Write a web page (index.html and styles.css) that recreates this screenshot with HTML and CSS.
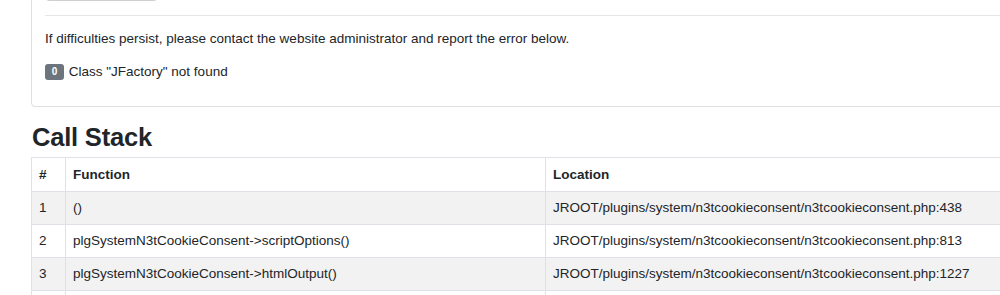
FILE: index.html
```html
<!DOCTYPE html>
<html lang="en">
<head>
  <meta charset="UTF-8">
  <title>Error</title>
  <link rel="stylesheet" href="styles.css">
</head>
<body>

<div class="page">
  <div class="card">
    <button class="back-btn">Return to home</button>
    <hr>
    <p>If difficulties persist, please contact the website administrator and report the error below.</p>
    <p><span class="badge">0</span> Class "JFactory" not found</p>
  </div>

  <h2>Call Stack</h2>
  <table class="stack">
    <thead>
      <tr><th class="num">#</th><th class="fn">Function</th><th>Location</th></tr>
    </thead>
    <tbody>
      <tr><td>1</td><td>()</td><td>JROOT/plugins/system/n3tcookieconsent/n3tcookieconsent.php:438</td></tr>
      <tr><td>2</td><td>plgSystemN3tCookieConsent-&gt;scriptOptions()</td><td>JROOT/plugins/system/n3tcookieconsent/n3tcookieconsent.php:813</td></tr>
      <tr><td>3</td><td>plgSystemN3tCookieConsent-&gt;htmlOutput()</td><td>JROOT/plugins/system/n3tcookieconsent/n3tcookieconsent.php:1227</td></tr>
      <tr><td>4</td><td>plgSystemN3tCookieConsent-&gt;onAfterRender()</td><td>JROOT/libraries/joomla/event/event.php:70</td></tr>
    </tbody>
  </table>
</div>

</body>
</html>
```

FILE: styles.css
```css
html, body { margin: 0; overflow: hidden; }
body { font-family: "Liberation Sans", Arial, sans-serif; font-size: 13.5px; color: #212529; background: white; }
.page { width: 1140px; padding-left: 31px; margin-top: -31px; }
.card { border: 1px solid #dfdfdf; border-radius: 4px; padding: 0 13px 12px; }
.back-btn { display: block; width: 113px; height: 31px; padding: 0 0 14px; background: white; border: 1px solid #cfcfcf; border-radius: 4px; font: inherit; color: #212529; }
hr { border: none; border-top: 1px solid #e6e6e6; margin: 14px 0 0; }
p { margin: 13px 0 12px; line-height: 20px; }
.badge { display: inline-block; width: 19px; height: 16px; line-height: 16px; text-align: center; vertical-align: 1px; background: #6c757d; color: white; font-size: 10px; font-weight: bold; border-radius: 3px; margin-right: 1px; }
h2 { font-size: 25.5px; line-height: 30px; font-weight: bold; margin: 15px 0 5px 1px; letter-spacing: -0.2px; }
.stack { border-collapse: collapse; width: 1100px; }
.stack th, .stack td { border: 1px solid #dee2e6; padding: 8px 7px; line-height: 16px; text-align: left; }
.stack th { padding: 9px 7px 8px; }
.stack .num { width: 19px; }
.stack .fn { width: 465px; }
.stack tbody tr:nth-child(odd) { background: #f2f2f2; }
```
